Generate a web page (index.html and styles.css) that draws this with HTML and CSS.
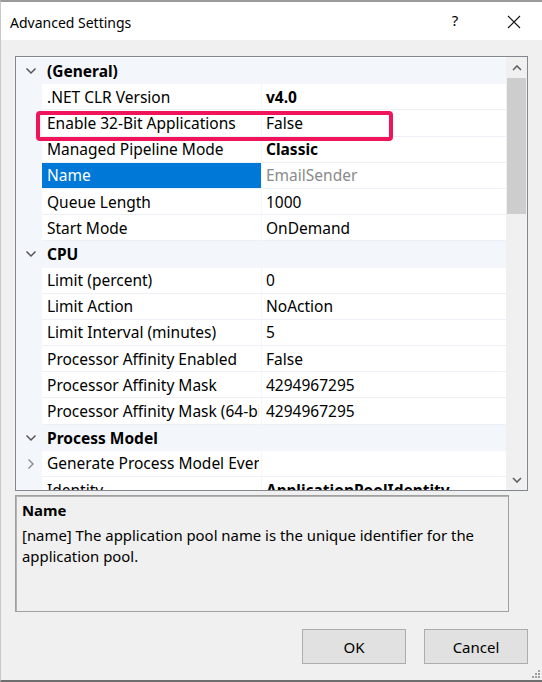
FILE: index.html
```html
<!DOCTYPE html>
<html>
<head>
<meta charset="utf-8">
<link rel="stylesheet" href="styles.css">
</head>
<body>
<div class="window">
  <div class="titlebar">
    <div class="title">Advanced Settings</div>
    <div class="help">?</div>
    <div class="close">
      <svg width="14" height="14" viewBox="0 0 14 14"><path d="M1 1 L13 13 M13 1 L1 13" stroke="#111" stroke-width="1.1" fill="none"/></svg>
    </div>
  </div>
  <div class="body">
    <div class="grid">
      <div class="rows">
        <div class="row cat"><span class="exp"><svg width="12" height="8" viewBox="0 0 12 8"><path d="M1.5 1.5 L6 6 L10.5 1.5" stroke="#555" stroke-width="1.5" fill="none"/></svg></span><span class="catname">(General)</span></div>
        <div class="row"><span class="exp"></span><span class="name">.NET CLR Version</span><span class="val b">v4.0</span></div>
        <div class="row"><span class="exp"></span><span class="name">Enable 32-Bit Applications</span><span class="val">False</span></div>
        <div class="row"><span class="exp"></span><span class="name">Managed Pipeline Mode</span><span class="val b">Classic</span></div>
        <div class="row"><span class="exp"></span><span class="name sel">Name</span><span class="val dim">EmailSender</span></div>
        <div class="row"><span class="exp"></span><span class="name">Queue Length</span><span class="val">1000</span></div>
        <div class="row"><span class="exp"></span><span class="name">Start Mode</span><span class="val">OnDemand</span></div>
        <div class="row cat"><span class="exp"><svg width="12" height="8" viewBox="0 0 12 8"><path d="M1.5 1.5 L6 6 L10.5 1.5" stroke="#555" stroke-width="1.5" fill="none"/></svg></span><span class="catname">CPU</span></div>
        <div class="row"><span class="exp"></span><span class="name">Limit (percent)</span><span class="val">0</span></div>
        <div class="row"><span class="exp"></span><span class="name">Limit Action</span><span class="val">NoAction</span></div>
        <div class="row"><span class="exp"></span><span class="name">Limit Interval (minutes)</span><span class="val">5</span></div>
        <div class="row"><span class="exp"></span><span class="name">Processor Affinity Enabled</span><span class="val">False</span></div>
        <div class="row"><span class="exp"></span><span class="name">Processor Affinity Mask</span><span class="val">4294967295</span></div>
        <div class="row"><span class="exp"></span><span class="name"><span class="clip">Processor Affinity Mask (64-bit option)</span></span><span class="val">4294967295</span></div>
        <div class="row cat"><span class="exp"><svg width="12" height="8" viewBox="0 0 12 8"><path d="M1.5 1.5 L6 6 L10.5 1.5" stroke="#555" stroke-width="1.5" fill="none"/></svg></span><span class="catname">Process Model</span></div>
        <div class="row"><span class="exp"><svg width="8" height="12" viewBox="0 0 8 12"><path d="M1.5 1.5 L6 6 L1.5 10.5" stroke="#888" stroke-width="1.4" fill="none"/></svg></span><span class="name"><span class="clip">Generate Process Model Event Log Entry</span></span><span class="val"></span></div>
        <div class="row"><span class="exp"></span><span class="name">Identity</span><span class="val b">ApplicationPoolIdentity</span></div>
      </div>
      <div class="scrollbar">
        <div class="arrow"><svg width="10" height="6" viewBox="0 0 10 6"><path d="M1 5 L5 1 L9 5" stroke="#606060" stroke-width="1.6" fill="none"/></svg></div>
        <div class="track"><div class="thumb"></div></div>
        <div class="arrow"><svg width="10" height="6" viewBox="0 0 10 6"><path d="M1 1 L5 5 L9 1" stroke="#606060" stroke-width="1.6" fill="none"/></svg></div>
      </div>
    </div>
    <div class="desc">
      <div class="desc-title">Name</div>
      <div class="desc-text">[name] The application pool name is the unique identifier for the application pool.</div>
    </div>
    <div class="buttons">
      <button class="btn">OK</button>
      <button class="btn">Cancel</button>
    </div>
  </div>
  <div class="highlight"></div>
  <div class="grip">
    <svg width="10" height="10" viewBox="0 0 10 10" fill="#a0a0a0"><rect x="7" y="1" width="2" height="2"/><rect x="4" y="4" width="2" height="2"/><rect x="7" y="4" width="2" height="2"/><rect x="1" y="7" width="2" height="2"/><rect x="4" y="7" width="2" height="2"/><rect x="7" y="7" width="2" height="2"/></svg>
  </div>
</div>
</body>
</html>
```
FILE: styles.css
```css
* { box-sizing: border-box; }
html, body { margin: 0; padding: 0; }
body {
  width: 542px;
  height: 682px;
  overflow: hidden;
  font-family: "Noto Sans", "Open Sans", sans-serif;
  font-size: 15.5px;
  color: #000;
}
.window {
  position: relative;
  width: 542px;
  height: 682px;
  background: #f0f0f0;
  border-top: 2px solid #9a9a9a;
  border-bottom: 2px solid #6e6e6e;
  border-left: 1px solid #c8c8c8;
  display: flex;
  flex-direction: column;
}
.titlebar {
  height: 38px;
  background: #fff;
  display: flex;
  align-items: center;
  flex: none;
}
.title {
  padding-left: 9px;
  font-size: 14px;
  flex: 1;
  padding-top: 2px;
}
.help {
  width: 20px;
  font-size: 15px;
  text-align: center;
  margin-right: 42px;
  padding-bottom: 2px;
}
.close {
  width: 14px;
  height: 14px;
  margin-right: 21px;
  display: flex;
  margin-top: 1px;
}
.body {
  flex: 1;
  padding: 16px 0 0 14px;
  display: flex;
  flex-direction: column;
}
.grid {
  width: 513px;
  height: 435px;
  border: 1px solid #828790;
  background: #fff;
  display: flex;
  padding-top: 1px;
}
.rows {
  flex: 1;
  overflow: hidden;
  display: flex;
  flex-direction: column;
}
.row {
  height: 26.2px;
  flex: none;
  display: flex;
  align-items: stretch;
  background: #f3f6fb;
}
.exp {
  width: 26px;
  flex: none;
  display: flex;
  align-items: center;
  justify-content: center;
  padding-left: 3px;
}
.name {
  width: 219px;
  flex: none;
  background: #fff;
  padding-left: 5px;
  white-space: nowrap;
  overflow: hidden;
  display: flex;
  align-items: center;
  border-bottom: 1px solid #edf0f6;
  margin-right: 1px;
}
.clip {
  display: block;
  width: 212px;
  overflow: hidden;
  white-space: nowrap;
}
.name.sel {
  background: #0078d7;
  color: #fff;
}
.val {
  flex: 1;
  background: #fff;
  padding-left: 4px;
  white-space: nowrap;
  overflow: hidden;
  display: flex;
  align-items: center;
  border-bottom: 1px solid #edf0f6;
}
.val.b { font-weight: 700; }
.val.dim { color: #8a8a8a; }
.catname {
  font-weight: 700;
  display: flex;
  align-items: center;
  padding-left: 5px;
}
.scrollbar {
  width: 21px;
  flex: none;
  background: #f0f0f0;
  display: flex;
  flex-direction: column;
  margin-top: -1px;
}
.arrow {
  height: 21px;
  display: flex;
  align-items: center;
  justify-content: center;
  flex: none;
}
.track {
  flex: 1;
  padding: 0 1px;
}
.thumb {
  height: 136px;
  background: #cdcdcd;
}
.desc {
  width: 494px;
  height: 117px;
  margin-top: 4px;
  border: 1px solid #a0a0a0;
  box-shadow: inset 1px 1px 0 #b4b4b4;
  padding: 4px 6px;
  font-size: 14.9px;
}
.desc-title {
  font-weight: 700;
  line-height: 21px;
}
.desc-text {
  line-height: 21px;
  margin-top: 4px;
  width: 478px;
}
.buttons {
  display: flex;
  justify-content: flex-end;
  gap: 18px;
  padding-right: 14px;
  margin-top: 17px;
}
.btn {
  width: 104px;
  height: 35px;
  background: #e1e1e1;
  border: 1px solid #adadad;
  font-family: inherit;
  font-size: 15px;
  color: #000;
  padding: 0;
}
.highlight {
  position: absolute;
  left: 35px;
  top: 109px;
  width: 357px;
  height: 30px;
  border: 4px solid #f0145a;
  border-radius: 4px;
}
.grip {
  position: absolute;
  right: 1px;
  bottom: 1px;
  width: 10px;
  height: 10px;
  display: flex;
}
```
